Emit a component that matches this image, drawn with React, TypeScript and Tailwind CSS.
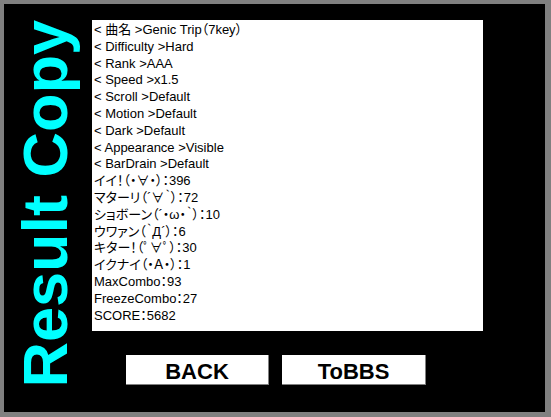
import React from 'react'

const lines = [
  '< 曲名 >Genic Trip（7key）',
  '< Difficulty >Hard',
  '< Rank >AAA',
  '< Speed >x1.5',
  '< Scroll >Default',
  '< Motion >Default',
  '< Dark >Default',
  '< Appearance >Visible',
  '< BarDrain >Default',
  'イイ！（・∀・）：396',
  'マターリ（´∀｀）：72',
  'ショボーン（´・ω・｀）：10',
  'ウワァン（｀Д´）：6',
  'キター！（ﾟ∀ﾟ）：30',
  'イクナイ（・Ａ・）：1',
  'MaxCombo：93',
  'FreezeCombo：27',
  'SCORE：5682',
]

export default function App() {
  return (
    <div className="w-[551px] h-[417px] bg-[#808080] pt-[4px] pl-[4px] pr-[6px] pb-[5px] font-['Liberation_Sans','Noto_Sans_CJK_JP',sans-serif]">
      <div className="flex h-full bg-black">
        {/* Title */}
        <div className="w-[88px] pt-[16px] pl-[10px]">
          <div className="[writing-mode:vertical-rl] rotate-180 text-[63px] leading-none font-bold text-[#00ffff] whitespace-nowrap">
            Result Copy
          </div>
        </div>

        {/* Result text + buttons */}
        <div className="flex flex-col pt-[16px]">
          <div className="w-[391px] h-[311px] bg-white pt-[2px] pl-[2px] text-[13px] leading-[16.8px] text-black [font-feature-settings:'palt']">
            {lines.map((line, i) => (
              <div key={i} className="whitespace-pre">
                {line}
              </div>
            ))}
          </div>

          <div className="flex gap-[13px] pl-[34px] mt-[24px]">
            <button className="w-[143px] h-[30px] bg-white border-r border-b border-[#808080] text-[22px] font-bold text-black">
              BACK
            </button>
            <button className="w-[144px] h-[30px] bg-white border-r border-b border-[#808080] text-[22px] font-bold text-black">
              ToBBS
            </button>
          </div>
        </div>
      </div>
    </div>
  )
}
